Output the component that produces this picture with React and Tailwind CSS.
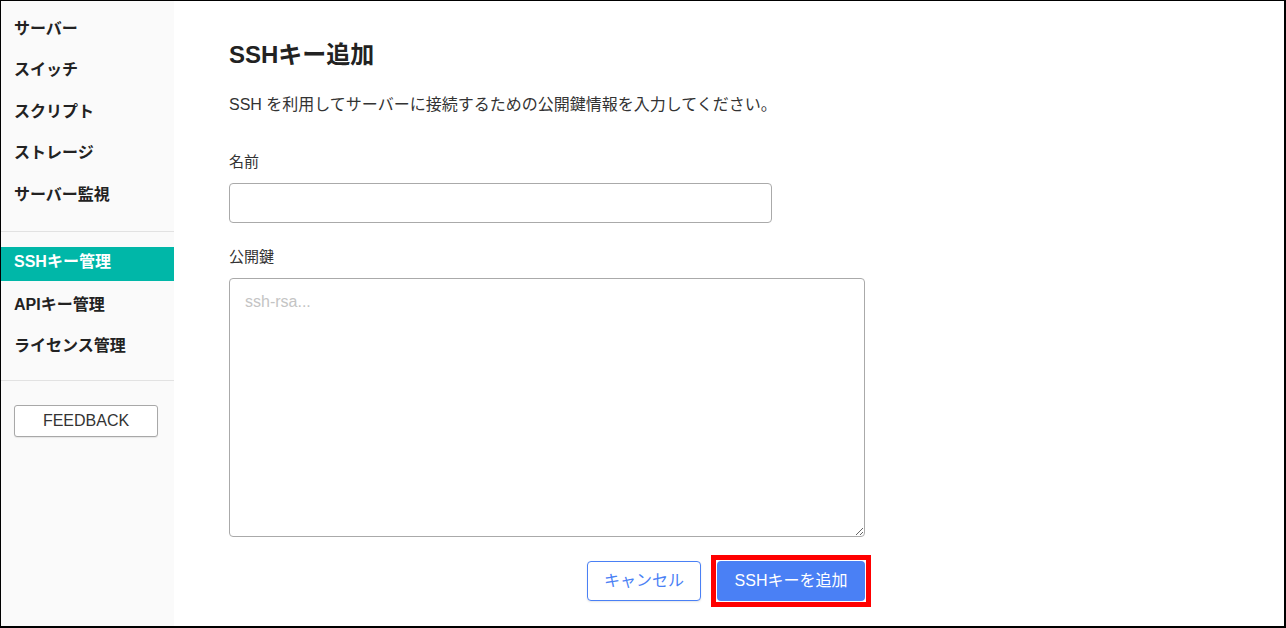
import React from "react";

const font = {
  fontFamily: '"Liberation Sans", "Noto Sans CJK JP", sans-serif',
};

const topItems = ["サーバー", "スイッチ", "スクリプト", "ストレージ", "サーバー監視"];

const Sidebar = () => (
  <aside className="w-[173px] shrink-0 bg-[#fafafa] flex flex-col">
    <ul className="pt-[7px] pb-[15px]">
      {topItems.map((label) => (
        <li
          key={label}
          className="h-[41.5px] flex items-center pl-[13px] text-[16px] font-bold text-[#222]"
        >
          {label}
        </li>
      ))}
    </ul>
    <ul className="border-t border-[#e2e2e2] pt-[12px] pb-[13px]">
      <li className="h-[41.5px] flex items-center">
        <div className="h-[34px] w-full flex items-center pl-[13px] pb-[4px] bg-[#00b7a8] text-white text-[16px] font-bold">
          SSHキー管理
        </div>
      </li>
      <li className="h-[41px] flex items-center pl-[13px] pb-[2px] text-[16px] font-bold text-[#222]">
        APIキー管理
      </li>
      <li className="h-[41px] flex items-center pl-[13px] pb-[2px] text-[16px] font-bold text-[#222]">
        ライセンス管理
      </li>
    </ul>
    <div className="border-t border-[#e2e2e2] pt-[24px] pl-[13px]">
      <button className="w-[144px] h-[32px] bg-white border border-[#a8a8a8] rounded-[3px] text-[16px] text-[#333] shadow-[0_1px_1px_rgba(0,0,0,0.08)]">
        FEEDBACK
      </button>
    </div>
  </aside>
);

export default function App() {
  return (
    <div
      className="w-[1286px] h-[628px] flex bg-white border-t border-l border-r-2 border-b-2 border-black overflow-hidden"
      style={font}
    >
      <Sidebar />
      <main className="flex-1 pl-[55px] pt-[38px]">
        <div className="w-[636px] flex flex-col">
          <h1 className="text-[24px] leading-[32px] font-bold text-[#222]">
            SSHキー追加
          </h1>
          <p className="mt-[22px] text-[16px] leading-[24px] text-[#333]">
            SSH を利用してサーバーに接続するための公開鍵情報を入力してください。
          </p>
          <label className="mt-[33px] text-[15px] leading-[24px] text-[#333]">
            名前
          </label>
          <input
            type="text"
            className="mt-[9px] w-[543px] h-[40px] border border-[#aaaaaa] rounded-[4px] bg-white px-[15px] text-[16px] outline-none"
          />
          <label className="mt-[22px] text-[15px] leading-[24px] text-[#333]">
            公開鍵
          </label>
          <textarea
            placeholder="ssh-rsa..."
            className="mt-[9px] w-[636px] h-[259px] border border-[#aaaaaa] rounded-[4px] bg-white px-[15px] py-[11px] text-[16px] leading-[24px] placeholder:text-[#c4c4c4] outline-none resize-y"
          />
          <div className="mt-[24px] flex justify-end gap-[16px]">
            <button className="w-[114px] h-[40px] border border-[#4a80f5] rounded-[4px] bg-white text-[#4a80f5] text-[16px] shadow-[0_1px_2px_rgba(0,0,0,0.1)]">
              キャンセル
            </button>
            <div className="relative">
              <button className="w-[148px] h-[40px] rounded-[4px] bg-[#4a80f5] text-white text-[16px]">
                SSHキーを追加
              </button>
              <div className="absolute -inset-[6px] border-[5px] border-[#ff0000] pointer-events-none" />
            </div>
          </div>
        </div>
      </main>
    </div>
  );
}
